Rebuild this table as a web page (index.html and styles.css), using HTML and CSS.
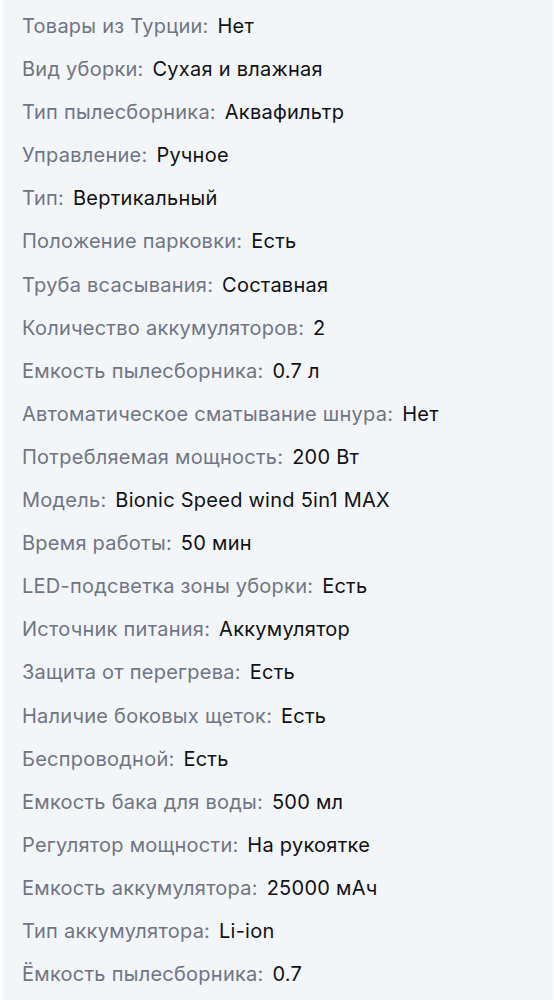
FILE: index.html
```html
<!DOCTYPE html>
<html lang="ru">
<head>
<meta charset="utf-8">
<link rel="stylesheet" href="styles.css">
</head>
<body>
<div class="card">
  <ul class="specs">
    <li class="row"><span class="label">Товары из Турции:</span> <span class="value">Нет</span></li>
    <li class="row"><span class="label">Вид уборки:</span> <span class="value">Сухая и влажная</span></li>
    <li class="row"><span class="label">Тип пылесборника:</span> <span class="value">Аквафильтр</span></li>
    <li class="row"><span class="label">Управление:</span> <span class="value">Ручное</span></li>
    <li class="row"><span class="label">Тип:</span> <span class="value">Вертикальный</span></li>
    <li class="row"><span class="label">Положение парковки:</span> <span class="value">Есть</span></li>
    <li class="row"><span class="label">Труба всасывания:</span> <span class="value">Составная</span></li>
    <li class="row"><span class="label">Количество аккумуляторов:</span> <span class="value">2</span></li>
    <li class="row"><span class="label">Емкость пылесборника:</span> <span class="value">0.7 л</span></li>
    <li class="row"><span class="label">Автоматическое сматывание шнура:</span> <span class="value">Нет</span></li>
    <li class="row"><span class="label">Потребляемая мощность:</span> <span class="value">200 Вт</span></li>
    <li class="row"><span class="label">Модель:</span> <span class="value">Bionic Speed wind 5in1 MAX</span></li>
    <li class="row"><span class="label">Время работы:</span> <span class="value">50 мин</span></li>
    <li class="row"><span class="label">LED-подсветка зоны уборки:</span> <span class="value">Есть</span></li>
    <li class="row"><span class="label">Источник питания:</span> <span class="value">Аккумулятор</span></li>
    <li class="row"><span class="label">Защита от перегрева:</span> <span class="value">Есть</span></li>
    <li class="row"><span class="label">Наличие боковых щеток:</span> <span class="value">Есть</span></li>
    <li class="row"><span class="label">Беспроводной:</span> <span class="value">Есть</span></li>
    <li class="row"><span class="label">Емкость бака для воды:</span> <span class="value">500 мл</span></li>
    <li class="row"><span class="label">Регулятор мощности:</span> <span class="value">На рукоятке</span></li>
    <li class="row"><span class="label">Емкость аккумулятора:</span> <span class="value">25000 мАч</span></li>
    <li class="row"><span class="label">Тип аккумулятора:</span> <span class="value">Li-ion</span></li>
    <li class="row"><span class="label">Ёмкость пылесборника:</span> <span class="value">0.7</span></li>
  </ul>
</div>
</body>
</html>
```
FILE: styles.css
```css
html, body {
  margin: 0;
  padding: 0;
  background: #ffffff;
}
body {
  font-family: Inter, "Noto Sans", sans-serif;
  height: 1000px;
  overflow: hidden;
}
.card {
  margin-left: 3px;
  margin-right: 1px;
  height: 1000px;
  background: #f3f6f8;
  padding-top: 5px;
  box-sizing: border-box;
}
.specs {
  list-style: none;
  margin: 0;
  padding: 0 0 0 19px;
}
.row {
  font-size: 20px;
  letter-spacing: 0.25px;
  line-height: 43.1px;
  white-space: nowrap;
}
.label {
  color: #6f7583;
}
.value {
  color: #111114;
  margin-left: 3px;
}
```
